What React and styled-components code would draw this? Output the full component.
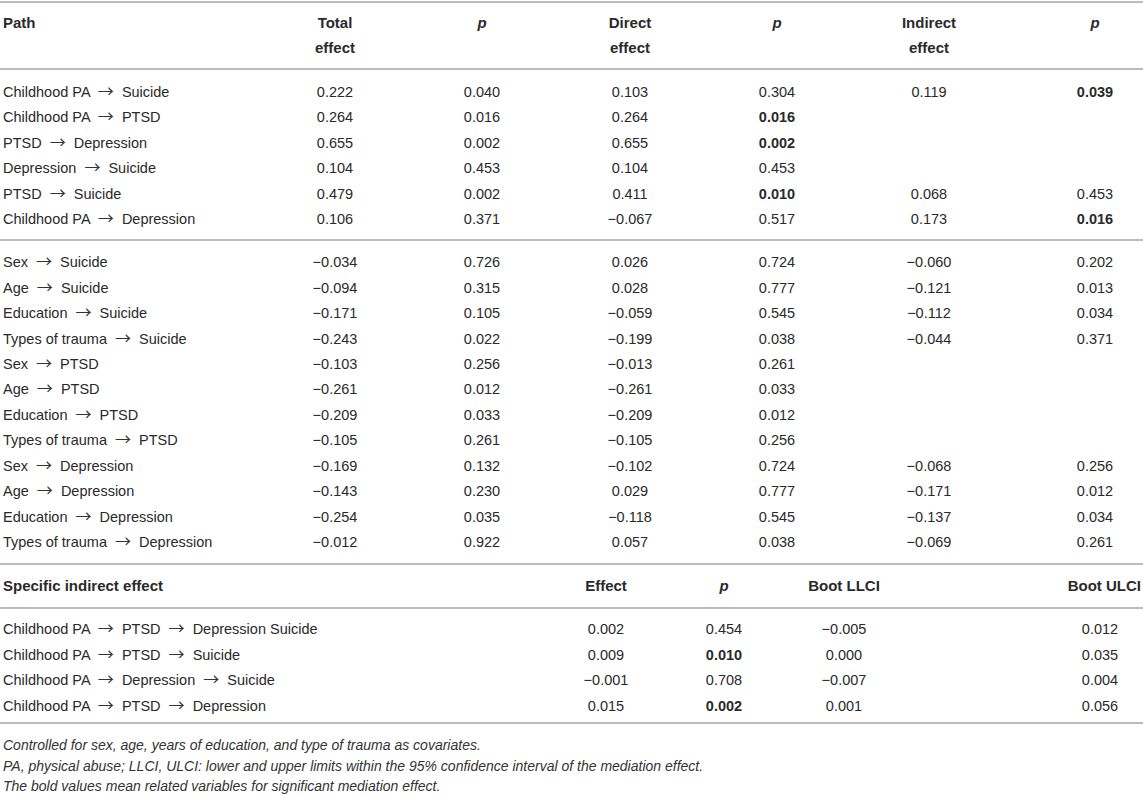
import React from "react";
import styled, { createGlobalStyle } from "styled-components";

const Global = createGlobalStyle`
  html, body { margin: 0; padding: 0; background: #ffffff; }
  body { font-family: "Liberation Sans", Arial, Helvetica, sans-serif; color: #2a2a2a; }
`;

const Page = styled.div`
  width: 1143px;
  padding-top: 1px;
  display: flex;
  flex-direction: column;
`;

const MAIN_COLS = "260px 150px 144px 152px 142px 162px 133px";
const SPEC_COLS = "545px 122px 114px 126px 236px";

const Section = styled.div`
  display: grid;
  grid-template-columns: ${(p) => p.$cols};
  border-top: 2px solid #bcbcbc;
  padding: ${(p) => p.$pad || "8px 0 8px"};
  ${(p) => (p.$bottom ? "border-bottom: 2px solid #bcbcbc;" : "")}
`;

const Cell = styled.div`
  font-size: ${(p) => (p.$bold && p.$head ? "15px" : "14.5px")};
  line-height: ${(p) => p.$lh || "25.45px"};
  text-align: ${(p) => p.$align || (p.$left ? "left" : "center")};
  padding-left: ${(p) => (p.$left ? "3px" : p.$pl || "0")};
  padding-right: ${(p) => p.$pr || "0"};
  font-weight: ${(p) => (p.$bold ? 700 : 400)};
  font-style: ${(p) => (p.$italic ? "italic" : "normal")};
  color: #2a2a2a;
  white-space: nowrap;
`;

const Arrow = styled.span`
  font-family: "Noto Sans CJK JP", "DejaVu Sans", sans-serif;
  font-size: 16px;
  line-height: 0;
  margin: 0 4px;
  color: #333;
`;

const Footnotes = styled.div`
  display: flex;
  flex-direction: column;
  padding: 11px 0 0 3px;
`;

const Note = styled.p`
  margin: 0;
  font-size: 14px;
  line-height: 20.5px;
  font-style: italic;
  color: #333;
`;

const B = (v) => ({ v, b: true });

const group1 = [
  ["Childhood PA → Suicide", "0.222", "0.040", "0.103", "0.304", "0.119", B("0.039")],
  ["Childhood PA → PTSD", "0.264", "0.016", "0.264", B("0.016"), "", ""],
  ["PTSD → Depression", "0.655", "0.002", "0.655", B("0.002"), "", ""],
  ["Depression → Suicide", "0.104", "0.453", "0.104", "0.453", "", ""],
  ["PTSD → Suicide", "0.479", "0.002", "0.411", B("0.010"), "0.068", "0.453"],
  ["Childhood PA → Depression", "0.106", "0.371", "−0.067", "0.517", "0.173", B("0.016")],
];

const group2 = [
  ["Sex → Suicide", "−0.034", "0.726", "0.026", "0.724", "−0.060", "0.202"],
  ["Age → Suicide", "−0.094", "0.315", "0.028", "0.777", "−0.121", "0.013"],
  ["Education → Suicide", "−0.171", "0.105", "−0.059", "0.545", "−0.112", "0.034"],
  ["Types of trauma → Suicide", "−0.243", "0.022", "−0.199", "0.038", "−0.044", "0.371"],
  ["Sex → PTSD", "−0.103", "0.256", "−0.013", "0.261", "", ""],
  ["Age → PTSD", "−0.261", "0.012", "−0.261", "0.033", "", ""],
  ["Education → PTSD", "−0.209", "0.033", "−0.209", "0.012", "", ""],
  ["Types of trauma → PTSD", "−0.105", "0.261", "−0.105", "0.256", "", ""],
  ["Sex → Depression", "−0.169", "0.132", "−0.102", "0.724", "−0.068", "0.256"],
  ["Age → Depression", "−0.143", "0.230", "0.029", "0.777", "−0.171", "0.012"],
  ["Education → Depression", "−0.254", "0.035", "−0.118", "0.545", "−0.137", "0.034"],
  ["Types of trauma → Depression", "−0.012", "0.922", "0.057", "0.038", "−0.069", "0.261"],
];

const spec = [
  ["Childhood PA → PTSD → Depression Suicide", "0.002", "0.454", "−0.005", "0.012"],
  ["Childhood PA → PTSD → Suicide", "0.009", B("0.010"), "0.000", "0.035"],
  ["Childhood PA → Depression → Suicide", "−0.001", "0.708", "−0.007", "0.004"],
  ["Childhood PA → PTSD → Depression", "0.015", B("0.002"), "0.001", "0.056"],
];

function PathLabel({ text }) {
  const parts = text.split(" → ");
  return parts.map((p, i) => (
    <React.Fragment key={i}>
      {i > 0 && (
        <>
          {" "}
          <Arrow>→</Arrow>{" "}
        </>
      )}
      {p}
    </React.Fragment>
  ));
}

function Rows({ rows, lastPad }) {
  return rows.map((row, ri) =>
    row.map((c, ci) => {
      const val = typeof c === "object" ? c.v : c;
      const bold = typeof c === "object" && c.b;
      const isLast = ci === row.length - 1;
      return (
        <Cell
          key={ri + "-" + ci}
          $left={ci === 0}
          $bold={bold}
          $pl={isLast ? lastPad : undefined}
        >
          {ci === 0 ? <PathLabel text={val} /> : val}
        </Cell>
      );
    })
  );
}

export default function App() {
  return (
    <Page>
      <Global />
      <Section $cols={MAIN_COLS} $pad="7px 0 8px">
        <Cell $left $bold $head $lh="25px">Path</Cell>
        <Cell $bold $head $lh="25px">Total<br />effect</Cell>
        <Cell $bold $head $italic $lh="25px">p</Cell>
        <Cell $bold $head $lh="25px">Direct<br />effect</Cell>
        <Cell $bold $head $italic $lh="25px">p</Cell>
        <Cell $bold $head $lh="25px">Indirect<br />effect</Cell>
        <Cell $bold $head $italic $lh="25px" $pl="37px">p</Cell>
      </Section>
      <Section $cols={MAIN_COLS} $pad="10px 0 6px">
        <Rows rows={group1} lastPad="37px" />
      </Section>
      <Section $cols={MAIN_COLS} $pad="9.5px 0 7px">
        <Rows rows={group2} lastPad="37px" />
      </Section>
      <Section $cols={SPEC_COLS} $pad="8.5px 0 8.5px">
        <Cell $left $bold $head>Specific indirect effect</Cell>
        <Cell $bold $head>Effect</Cell>
        <Cell $bold $head $italic>p</Cell>
        <Cell $bold $head>Boot LLCI</Cell>
        <Cell $bold $head $align="right" $pr="2px">Boot ULCI</Cell>
      </Section>
      <Section $cols={SPEC_COLS} $pad="8.3px 0 3px" $bottom>
        <Rows rows={spec} lastPad="150px" />
      </Section>
      <Footnotes>
        <Note>Controlled for sex, age, years of education, and type of trauma as covariates.</Note>
        <Note>PA, physical abuse; LLCI, ULCI: lower and upper limits within the 95% confidence interval of the mediation effect.</Note>
        <Note>The bold values mean related variables for significant mediation effect.</Note>
      </Footnotes>
    </Page>
  );
}
